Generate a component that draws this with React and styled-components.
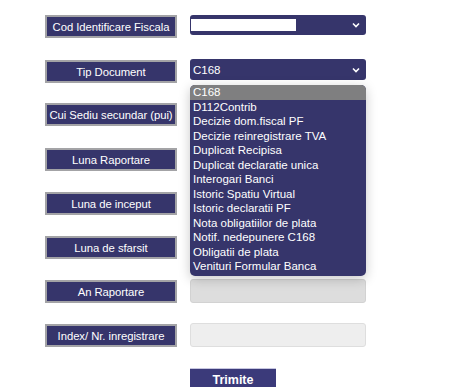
import React from "react";
import styled, { createGlobalStyle } from "styled-components";

const Global = createGlobalStyle`
  html, body { margin: 0; padding: 0; background: #ffffff; }
  body { font-family: "Liberation Sans", Arial, sans-serif; }
`;

const Page = styled.div`
  position: relative;
  width: 452px;
  height: 387px;
  overflow: hidden;
  padding: 15px 0 0 45px;
  box-sizing: border-box;
`;

const Form = styled.div`
  display: flex;
  flex-direction: column;
`;

const Row = styled.div`
  position: relative;
  display: grid;
  grid-template-columns: 132px 176px;
  column-gap: 13px;
  align-items: start;
  height: ${(p) => p.$h || 44}px;
`;

const Label = styled.div`
  box-sizing: border-box;
  height: 23px;
  border: 2px solid #a3a3a6;
  background: #36356b;
  color: #ffffff;
  font-size: 11.3px;
  display: flex;
  align-items: center;
  justify-content: center;
  white-space: nowrap;
  letter-spacing: -0.05px;
`;

const Select = styled.div`
  box-sizing: border-box;
  height: ${(p) => p.$h}px;
  margin-top: ${(p) => p.$mt || 0}px;
  background: #36356b;
  border-radius: 3px;
  color: #ffffff;
  font-size: 11.5px;
  display: flex;
  align-items: center;
  padding: 0 6px 0 2px;
  justify-content: space-between;
`;

const WhiteBox = styled.span`
  display: block;
  width: 105px;
  height: 12px;
  background: #ffffff;
  margin-left: -1px;
`;

const Value = styled.span`
  padding-left: 1px;
`;

const Chevron = () => (
  <svg width="8" height="6" viewBox="0 0 8 6">
    <path d="M1 1.5 L4 4.5 L7 1.5" fill="none" stroke="#ffffff" strokeWidth="1.6" />
  </svg>
);

const Input = styled.div`
  box-sizing: border-box;
  height: 24px;
  margin-top: ${(p) => p.$mt || 0}px;
  background: ${(p) => p.$bg};
  border: 1px solid ${(p) => p.$bd};
  border-radius: 3px;
`;

const List = styled.div`
  position: absolute;
  left: 145px;
  top: 25px;
  width: 176px;
  box-sizing: border-box;
  background: #36356b;
  border-radius: 5px;
  padding: 0 0 2px 0;
  box-shadow: 0 3px 12px rgba(0, 0, 0, 0.22);
  z-index: 5;
  overflow: hidden;
`;

const Option = styled.div`
  height: 14.5px;
  line-height: 14.5px;
  padding-left: 3px;
  font-size: 11.5px;
  color: #ffffff;
  white-space: nowrap;
  background: ${(p) => (p.$sel ? "#7f7f80" : "transparent")};
`;

const ButtonRow = styled.div`
  display: grid;
  grid-template-columns: 132px 86px;
  column-gap: 13px;
  margin-top: 0px;
`;

const Button = styled.div`
  grid-column: 2;
  box-sizing: border-box;
  height: 22px;
  background: #3b3a7a;
  border-top: 1px solid #c7c6e0;
  color: #ffffff;
  font-weight: bold;
  font-size: 12.5px;
  display: flex;
  align-items: center;
  justify-content: center;
`;

const options = [
  "C168",
  "D112Contrib",
  "Decizie dom.fiscal PF",
  "Decizie reinregistrare TVA",
  "Duplicat Recipisa",
  "Duplicat declaratie unica",
  "Interogari Banci",
  "Istoric Spatiu Virtual",
  "Istoric declaratii PF",
  "Nota obligatiilor de plata",
  "Notif. nedepunere C168",
  "Obligatii de plata",
  "Venituri Formular Banca",
];

export default function App() {
  return (
    <>
      <Global />
      <Page>
        <Form>
          <Row $h={45}>
            <Label>Cod Identificare Fiscala</Label>
            <Select $h={20}>
              <WhiteBox />
              <Chevron />
            </Select>
          </Row>
          <Row $h={43}>
            <Label>Tip Document</Label>
            <Select $h={21} $mt={-1}>
              <Value>C168</Value>
              <Chevron />
            </Select>
            <List>
              {options.map((o, i) => (
                <Option key={o} $sel={i === 0}>
                  {o}
                </Option>
              ))}
            </List>
          </Row>
          <Row $h={45}>
            <Label>Cui Sediu secundar (pui)</Label>
          </Row>
          <Row $h={44}>
            <Label>Luna Raportare</Label>
          </Row>
          <Row $h={44}>
            <Label>Luna de inceput</Label>
          </Row>
          <Row $h={44}>
            <Label>Luna de sfarsit</Label>
          </Row>
          <Row $h={44}>
            <Label>An Raportare</Label>
            <Input $mt={-1} $bg="#dddddd" $bd="#d2d2d2" />
          </Row>
          <Row $h={44}>
            <Label>Index/ Nr. inregistrare</Label>
            <Input $mt={-1} $bg="#eeeeee" $bd="#dedede" />
          </Row>
          <ButtonRow>
            <Button>Trimite</Button>
          </ButtonRow>
        </Form>
      </Page>
    </>
  );
}
